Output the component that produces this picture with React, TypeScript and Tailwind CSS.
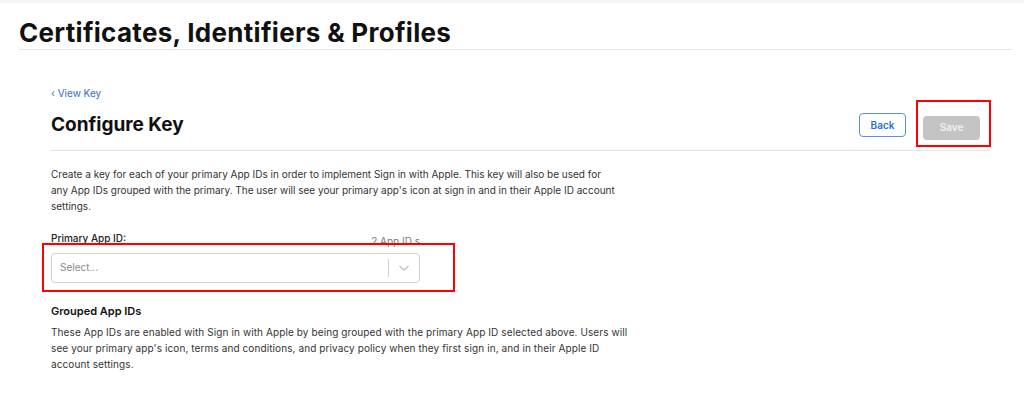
export default function App() {
  return (
    <div className="min-h-[412px] w-full bg-white text-[#1d1d1f]" style={{ fontFamily: "Inter, 'Liberation Sans', sans-serif" }}>
      <div className="h-[3px] bg-[#f5f5f5]" />

      <header className="mx-[19px] mr-[12px] border-b border-[#e6e6e6] pt-[16px] pb-[2px]">
        <h1 className="text-[26px] font-bold leading-[28px] tracking-[0.3px] text-[#111]">
          Certificates, Identifiers &amp; Profiles
        </h1>
      </header>

      <main className="ml-[51px] mr-[34px] pt-[37px]">
        <a href="#" className="block text-[10px] leading-[12px] text-[#2f6fd0]">
          ‹ View Key
        </a>

        <div className="mt-[14px] flex items-end justify-between border-b border-[#e3e3e3] pb-[10px]">
          <h2 className="mb-[4px] text-[19px] font-bold leading-[22px] text-[#111]">Configure Key</h2>
          <div className="mr-[10px] flex gap-[17px]">
            <button className="h-[24px] w-[47px] rounded-[4px] border border-[#5b8fe0] bg-white text-[10px] font-semibold text-[#2f6fd0]">
              Back
            </button>
            <div className="relative">
              <button className="h-[24px] w-[57px] rounded-[4px] bg-[#c4c4c4] text-[10px] font-semibold text-[#f0f0f0]">
                Save
              </button>
              <div className="pointer-events-none absolute -top-[13px] -left-[7px] h-[47px] w-[75px] border-2 border-[#ff0000]" />
            </div>
          </div>
        </div>

        <p className="mt-[15px] whitespace-nowrap text-[10px] leading-[16px] text-[#333]">
          Create a key for each of your primary App IDs in order to implement Sign in with Apple. This key will also be used for
          <br />
          any App IDs grouped with the primary. The user will see your primary app's icon at sign in and in their Apple ID account
          <br />
          settings.
        </p>

        <div className="mt-[18px] w-[369px]">
          <div className="flex items-end justify-between">
            <span className="text-[10px] font-medium leading-[12px] text-[#222]">Primary App ID:</span>
            <span className="translate-y-[3px] text-[10px] leading-[12px] text-[#777]">2 App ID s</span>
          </div>
          <div className="relative mt-[9px]">
            <div className="flex h-[30px] items-center rounded-[4px] border border-[#cfcfcf] bg-white">
              <span className="flex-1 pl-[8px] text-[10px] text-[#8a8a8a]">Select...</span>
              <span className="h-[18px] w-px bg-[#cfcfcf]" />
              <svg width="30" height="14" viewBox="0 0 30 14" className="shrink-0">
                <path d="M10.5 5 L15 9 L19.5 5" fill="none" stroke="#c4c4c4" strokeWidth="1.4" />
              </svg>
            </div>
            <div className="pointer-events-none absolute -top-[10px] -left-[9px] h-[49px] w-[413px] border-2 border-[#ff0000]" />
          </div>
        </div>

        <h3 className="mt-[21px] text-[11px] font-semibold leading-[14px] text-[#111]">Grouped App IDs</h3>
        <p className="mt-[6px] whitespace-nowrap text-[10px] leading-[16px] tracking-[0.1px] text-[#333]">
          These App IDs are enabled with Sign in with Apple by being grouped with the primary App ID selected above. Users will
          <br />
          see your primary app's icon, terms and conditions, and privacy policy when they first sign in, and in their Apple ID
          <br />
          account settings.
        </p>
      </main>
    </div>
  );
}
